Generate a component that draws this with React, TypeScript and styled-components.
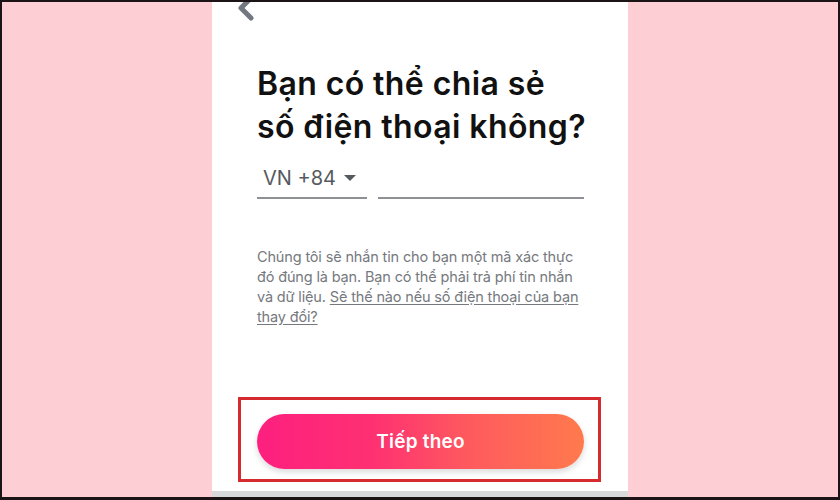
import styled, { createGlobalStyle } from "styled-components";

const Global = createGlobalStyle`
  html, body { margin: 0; padding: 0; }
  body { font-family: "Inter", "Liberation Sans", sans-serif; }
  *, *::before, *::after { box-sizing: border-box; }
`;

// khung ngoài cùng của ảnh chụp
const Frame = styled.div`
  width: 840px;
  height: 500px;
  border: solid #1b1316;
  border-width: 2px 2px 3px 2px;
  background: #fdcfd5;
  display: flex;
  justify-content: center;
  overflow: hidden;
`;

const Phone = styled.div`
  width: 416px;
  background: #fff;
  display: flex;
  flex-direction: column;
`;

const Screen = styled.div`
  flex: 1;
  display: flex;
  flex-direction: column;
  padding: 0 44px 0 45px;
`;

const BackButton = styled.div`
  margin: -8px 0 0 -26px;
  width: 30px;
  height: 30px;
  color: #737781;
`;

const Title = styled.h1`
  margin: 38px 0 0;
  font-family: "Inter", sans-serif;
  font-weight: 600;
  font-size: 32px;
  line-height: 43px;
  color: #111;
  letter-spacing: 0.4px;
  white-space: nowrap;
`;

const PhoneRow = styled.div`
  display: flex;
  gap: 11px;
  margin-top: 10px;
`;

const Field = styled.div<{ $grow?: boolean }>`
  height: 41px;
  ${(p) => (p.$grow ? "flex: 1;" : "width: 110px;")}
  border-bottom: 2px solid #8d9196;
  display: flex;
  align-items: center;
  padding-left: 6px;
  gap: 8px;
  font-family: "Inter", sans-serif;
  font-size: 20px;
  color: #555a60;
`;

const Caret = styled.span`
  width: 0;
  height: 0;
  border-left: 6px solid transparent;
  border-right: 6px solid transparent;
  border-top: 6px solid #555a60;
`;

const Note = styled.p`
  margin: 48px 0 0;
  font-family: "Inter", sans-serif;
  font-size: 14.5px;
  line-height: 20px;
  letter-spacing: -0.15px;
  color: #75797e;
`;

const NoteLink = styled.span`
  text-decoration: underline;
  text-underline-offset: 2px;
`;

const Spacer = styled.div`
  flex: 1;
`;

const Highlight = styled.div`
  margin: 0 -17px 9px -19px;
  border: 3px solid #d52a2e;
  padding: 14px 14px 10px 16px;
`;

const NextButton = styled.button`
  width: 100%;
  height: 55px;
  border: none;
  border-radius: 28px;
  background: linear-gradient(90deg, #fd1f7f 0%, #fe3072 35%, #fe5a5e 65%, #ff7a4d 100%);
  box-shadow: 0 3px 6px rgba(0, 0, 0, 0.15);
  color: #fff;
  font-family: "Inter", sans-serif;
  font-weight: 600;
  font-size: 19px;
  letter-spacing: 0.2px;
`;

const BottomBar = styled.div`
  height: 6px;
  background: #d7d9db;
`;

export default function App() {
  return (
    <>
      <Global />
      <Frame>
        <Phone>
          <Screen>
            <BackButton>
              <svg viewBox="0 0 30 30" width="30" height="30">
                <path d="M20 4 L10 14 L20 24" fill="none" stroke="currentColor" strokeWidth="5" strokeLinecap="round" strokeLinejoin="round" />
              </svg>
            </BackButton>
            <Title>
              Bạn có thể chia sẻ
              <br />
              số điện thoại không?
            </Title>
            <PhoneRow>
              <Field>
                VN +84 <Caret />
              </Field>
              <Field $grow />
            </PhoneRow>
            <Note>
              Chúng tôi sẽ nhắn tin cho bạn một mã xác thực đó đúng là bạn. Bạn có thể phải trả phí tin nhắn và dữ liệu.{" "}
              <NoteLink>Sẽ thế nào nếu số điện thoại của bạn thay đổi?</NoteLink>
            </Note>
            <Spacer />
            <Highlight>
              <NextButton>Tiếp theo</NextButton>
            </Highlight>
          </Screen>
          <BottomBar />
        </Phone>
      </Frame>
    </>
  );
}
